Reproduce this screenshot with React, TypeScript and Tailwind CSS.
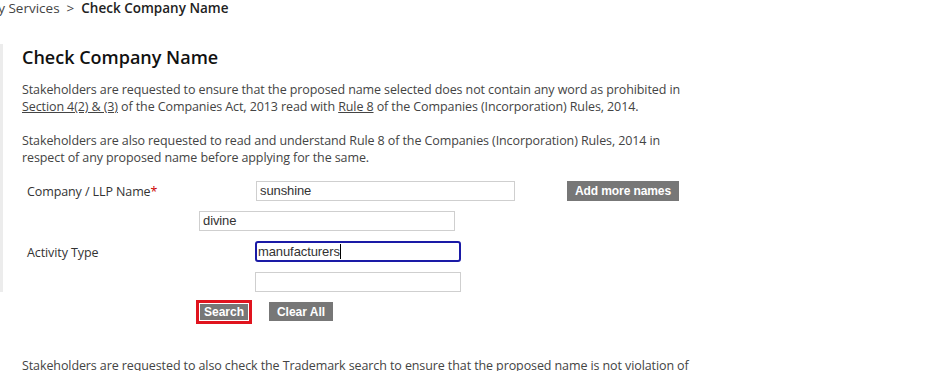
import React from "react";

const body = { fontFamily: "'Open Sans', 'Noto Sans', sans-serif" };
const arial = { fontFamily: "'Liberation Sans', Arial, sans-serif" };

function TextBox({ value, focused, className }: { value?: string; focused?: boolean; className: string }) {
    return (
        <div
            className={
                focused
                    ? `h-[21px] border-2 border-[#1a1aa6] rounded-[3px] flex items-center px-[1px] text-[13px] text-[#333] ${className}`
                    : `h-[20px] border border-[#cfcfcf] flex items-center px-[3px] text-[13px] text-[#333] ${className}`
            }
            style={arial}
        >
            {value}
            {focused && <span className="w-px h-[15px] bg-black" />}
        </div>
    );
}

function GrayButton({ label, className }: { label: string; className?: string }) {
    return (
        <div
            className={`bg-[#777777] text-white font-bold text-[12px] h-[19px] flex items-center justify-center ${className ?? ""}`}
            style={arial}
        >
            {label}
        </div>
    );
}

export default function App() {
    return (
        <div className="w-[937px] h-[371px] overflow-hidden bg-white text-[#333]" style={body}>
            <div className="h-[14px] flex items-center text-[13.5px] text-[#444] pt-[2px] -ml-[55px] whitespace-nowrap">
                <span>Company Services</span>
                <span className="mx-[7px]">&gt;</span>
                <span className="font-semibold text-[#222]">Check Company Name</span>
            </div>

            <div className="mt-[30px] border-l-[3px] border-[#ececec] pl-[19px] w-[700px]">
                <h1 className="text-[18px] font-semibold text-[#111] leading-[24px] pt-[1px]">Check Company Name</h1>

                <div className="mt-[12px] text-[12.5px] leading-[17px] text-[#444] tracking-[-0.1px]">
                    <p>
                        Stakeholders are requested to ensure that the proposed name selected does not contain any word as prohibited in
                        <br />
                        <span className="underline">Section 4(2) &amp; (3)</span> of the Companies Act, 2013 read with{" "}
                        <span className="underline">Rule 8</span> of the Companies (Incorporation) Rules, 2014.
                    </p>
                    <p className="mt-[17px]">
                        Stakeholders are also requested to read and understand Rule 8 of the Companies (Incorporation) Rules, 2014 in
                        <br />
                        respect of any proposed name before applying for the same.
                    </p>
                </div>

                <div className="mt-[15px] text-[12.5px] text-[#333] tracking-[-0.1px]">
                    <div className="flex items-center h-[20px]">
                        <span className="w-[234px] pl-[5px] pt-[3px]">
                            Company / LLP Name<span className="text-[#c00]">*</span>
                        </span>
                        <TextBox value="sunshine" className="w-[259px]" />
                        <GrayButton label="Add more names" className="ml-[52px] w-[112px] h-[20px]" />
                    </div>
                    <div className="flex mt-[10px] pl-[177px]">
                        <TextBox value="divine" className="w-[256px]" />
                    </div>
                    <div className="flex items-center mt-[10px]">
                        <span className="w-[233px] pl-[5px] pt-[3px]">Activity Type</span>
                        <TextBox value="manufacturers" focused className="w-[206px]" />
                    </div>
                    <div className="flex mt-[9px] pl-[233px]">
                        <TextBox className="w-[206px]" />
                    </div>
                </div>
            </div>

            <div className="flex items-center mt-[8px] pl-[196px]">
                <div className="border-[3px] border-[#e0141e] p-[1px] w-[56px] h-[24px]">
                    <GrayButton label="Search" className="h-full" />
                </div>
                <GrayButton label="Clear All" className="ml-[17px] w-[64px]" />
            </div>

            <p className="mt-[33px] ml-[22px] text-[12.5px] text-[#444] tracking-[-0.1px] whitespace-nowrap">
                Stakeholders are requested to also check the Trademark search to ensure that the proposed name is not violation of
            </p>
        </div>
    );
}
